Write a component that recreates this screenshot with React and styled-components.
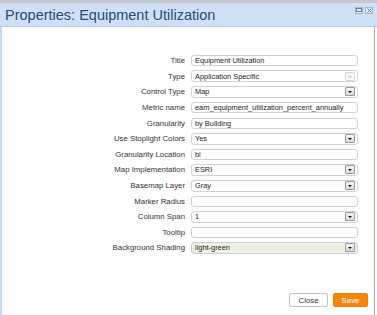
import React from "react";
import styled, { createGlobalStyle } from "styled-components";

const Global = createGlobalStyle`
  html, body {
    margin: 0;
    padding: 0;
    background: #fff;
  }
  * { box-sizing: border-box; }
`;

const Page = styled("div")`
  width: 377px;
  height: 315px;
  display: flex;
  flex-direction: column;
  font-family: "Liberation Sans", Arial, sans-serif;
  overflow: hidden;
  background: #fff;
`;

const TopStrip = styled("div")`
  height: 3px;
  background: #c6c8cc;
`;

const Header = styled("div")`
  height: 24px;
  display: flex;
  align-items: center;
  justify-content: space-between;
  padding: 0 4px 0 5px;
  background: #cfe0f6;
  border-bottom: 1px solid #b7cde9;
`;

const HeaderTitle = styled("span")`
  font-size: 14.5px;
  color: #2b4a78;
  margin-top: 1px;
`;

const Tools = styled("div")`
  display: flex;
  gap: 2px;
  margin-top: -9px;
`;

const Tool = styled("span")`
  width: 8px;
  height: 7px;
  border: 1px solid #9fb5d3;
  background: #e3ecf8;
  display: flex;
  align-items: center;
  justify-content: center;
`;

const Body = styled("div")`
  flex: 1;
  display: flex;
  border-left: 2px solid #c7daf1;
`;

const Panel = styled("div")`
  flex: 1;
  display: flex;
  flex-direction: column;
  border-right: 1px solid #a9adb3;
  margin-right: 2px;
`;

const Form = styled("div")`
  display: grid;
  grid-template-columns: 183px 167px;
  grid-auto-rows: 15.6px;
  column-gap: 6px;
  align-items: center;
  padding-top: 26px;
`;

const Label = styled("span")`
  text-align: right;
  font-size: 7.8px;
  color: #333;
  white-space: nowrap;
`;

const Field = styled("div")`
  height: ${(p) => (p.$select ? "12px" : "11px")};
  border: 1px solid #cfd3d8;
  border-radius: 3px;
  background: ${(p) => p.$bg || "#fff"};
  display: flex;
  align-items: center;
  justify-content: space-between;
  padding: 0 2px 0 3px;
  font-size: 7.4px;
  color: #222;
  white-space: nowrap;
  overflow: hidden;
`;

const Arrow = styled("span")`
  width: 10px;
  height: 9px;
  border: 1px solid ${(p) => (p.$disabled ? "#d6d6d6" : "#9a9a9a")};
  border-radius: 1px;
  background: ${(p) => (p.$disabled ? "#f7f7f7" : "linear-gradient(#f4f4f4, #d9d9d9)")};
  display: flex;
  align-items: center;
  justify-content: center;
  &::after {
    content: "";
    border-left: 2.5px solid transparent;
    border-right: 2.5px solid transparent;
    border-top: 2.5px solid ${(p) => (p.$disabled ? "#bdbdbd" : "#111")};
    margin-top: 1px;
  }
`;

const Footer = styled("div")`
  margin-top: auto;
  display: flex;
  justify-content: flex-end;
  gap: 5px;
  padding: 0 6px 8px 0;
`;

const Button = styled("button")`
  height: 14px;
  width: ${(p) => (p.$primary ? "35px" : "39px")};
  border-radius: 2px;
  border: 1px solid ${(p) => (p.$primary ? "#f08000" : "#bfc3c8")};
  background: ${(p) => (p.$primary ? "#f7850f" : "#fff")};
  color: ${(p) => (p.$primary ? "#fff" : "#333")};
  font-family: "Liberation Sans", Arial, sans-serif;
  font-size: 7.8px;
  padding: 0;
  cursor: pointer;
`;

const rows = [
  { label: "Title", value: "Equipment Utilization" },
  { label: "Type", value: "Application Specific", select: true, disabled: true },
  { label: "Control Type", value: "Map", select: true },
  { label: "Metric name", value: "eam_equipment_utilization_percent_annually" },
  { label: "Granularity", value: "by Building" },
  { label: "Use Stoplight Colors", value: "Yes", select: true },
  { label: "Granularity Location", value: "bl" },
  { label: "Map Implementation", value: "ESRI", select: true },
  { label: "Basemap Layer", value: "Gray", select: true },
  { label: "Marker Radius", value: "" },
  { label: "Column Span", value: "1", select: true },
  { label: "Tooltip", value: "" },
  { label: "Background Shading", value: "light-green", select: true, bg: "#eef2e2" },
];

const App = () => {
  return (
    <>
      <Global />
      <Page>
        <TopStrip />
        <Header>
          <HeaderTitle>Properties: Equipment Utilization</HeaderTitle>
          <Tools>
            <Tool>
              <svg width="6" height="4" viewBox="0 0 6 4">
                <rect x="0.5" y="0.5" width="5" height="3" fill="none" stroke="#5f7ea8" />
              </svg>
            </Tool>
            <Tool>
              <svg width="5" height="5" viewBox="0 0 5 5">
                <path d="M0.5 0.5 L4.5 4.5 M4.5 0.5 L0.5 4.5" stroke="#5f7ea8" strokeWidth="1" />
              </svg>
            </Tool>
          </Tools>
        </Header>
        <Body>
          <Panel>
            <Form>
              {rows.map((r) => (
                <React.Fragment key={r.label}>
                  <Label>{r.label}</Label>
                  <Field $select={r.select} $bg={r.bg}>
                    <span>{r.value}</span>
                    {r.select && <Arrow $disabled={r.disabled} />}
                  </Field>
                </React.Fragment>
              ))}
            </Form>
            <Footer>
              <Button>Close</Button>
              <Button $primary>Save</Button>
            </Footer>
          </Panel>
        </Body>
      </Page>
    </>
  );
};

export default App;
